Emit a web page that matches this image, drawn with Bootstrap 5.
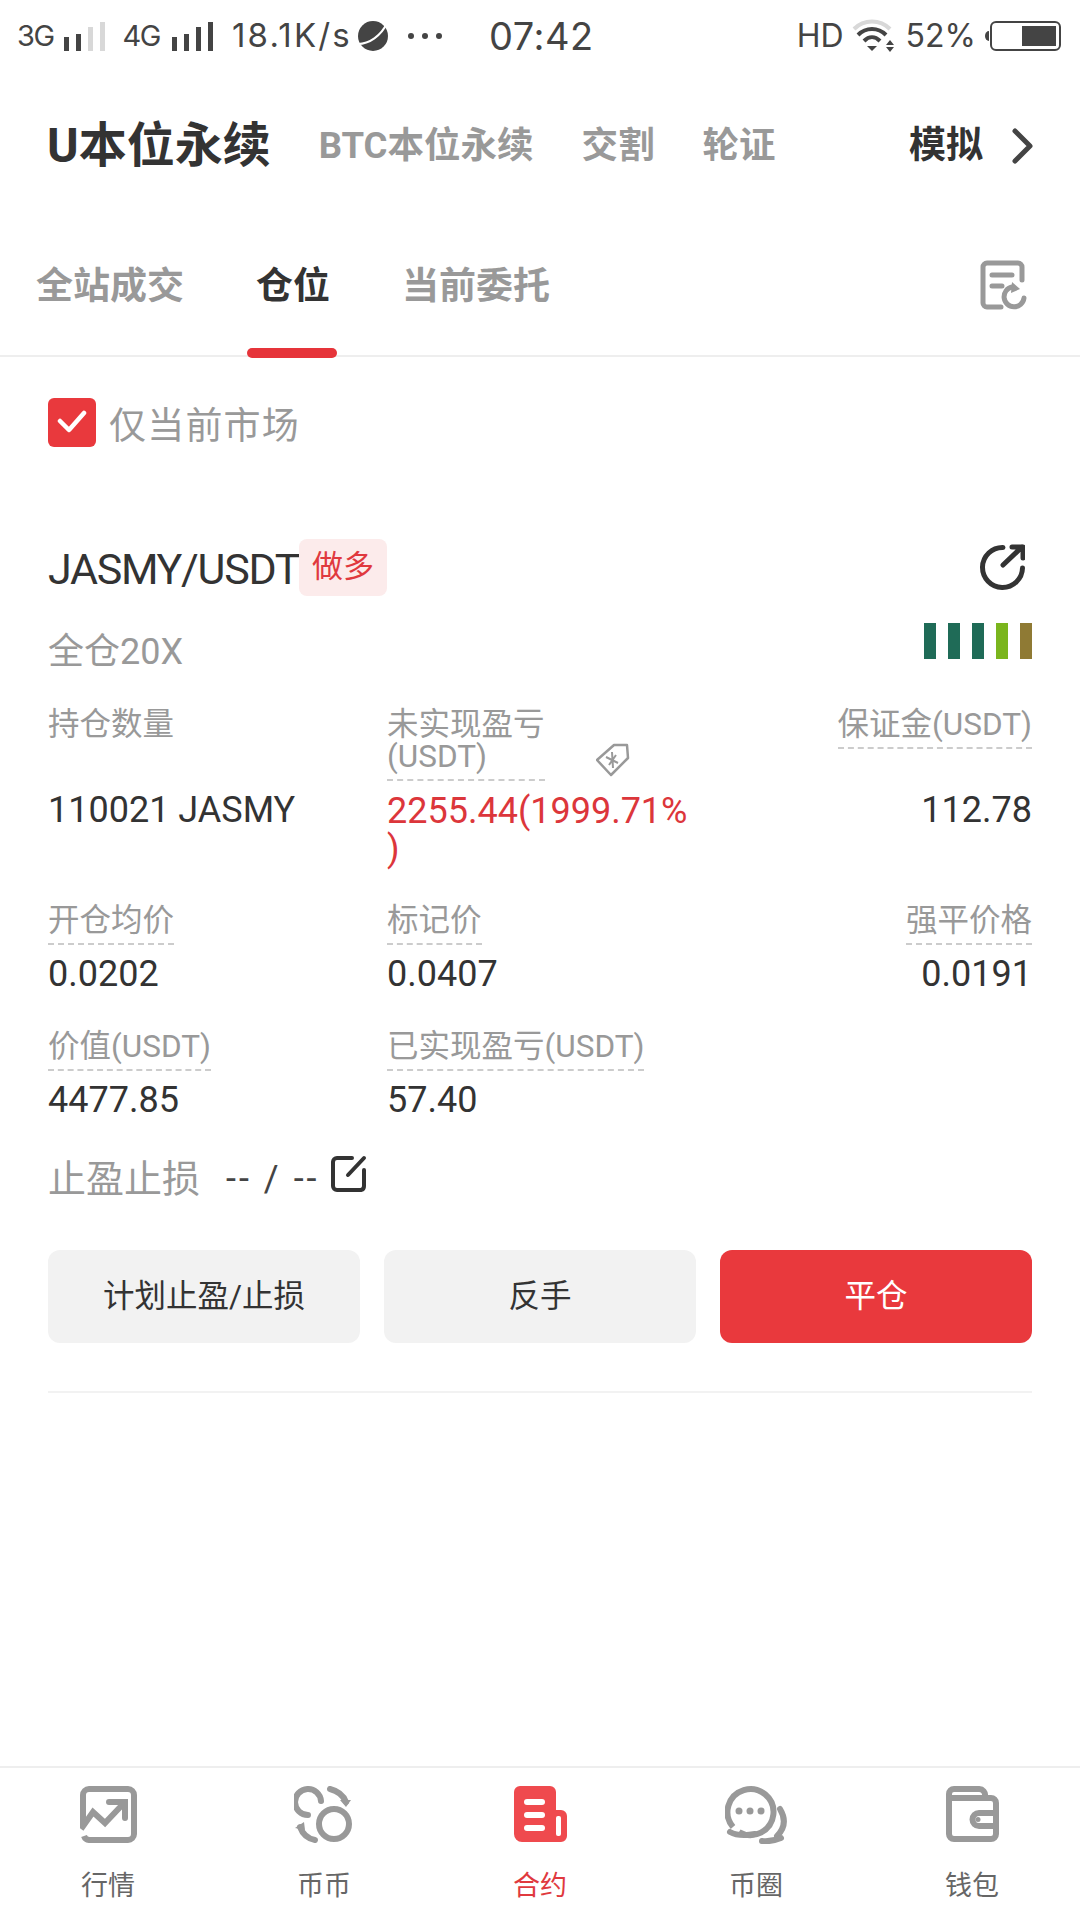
<!DOCTYPE html>
<html lang="zh">

<head>
    <meta charset="UTF-8">
    <title>合约</title>
    <link href="https://cdn.jsdelivr.net/npm/bootstrap@5.3.0/dist/css/bootstrap.min.css" rel="stylesheet">

    <style>
        body {
            background: #fff;
            color: #333;
            font-family: "Roboto", "Noto Sans CJK SC", sans-serif;
        }

        .status-bar {
            height: 72px;
            padding: 0 18px 0 17px;
            color: #444;
            font-family: "Inter", "Roboto", sans-serif;
        }

        .status-sm { font-size: 29px; letter-spacing: -1.5px; }
        .status-md { font-size: 32px; }
        .status-speed { font-size: 33px; letter-spacing: 2.2px; margin-left: 18px; }
        .status-time { font-size: 38px; margin-left: 46px; letter-spacing: .5px; }
        .sig-one { margin-left: 10px; }
        .net-two { margin-left: 17px; }
        .sig-two { margin-left: 12px; }
        .planet { margin-left: 5px; }
        .more-dots { margin-left: 18px; }

        .market-nav {
            height: 148px;
            padding: 0 46px 0 47px;
        }

        .market-main { font-size: 48px; font-weight: 700; color: #333; margin-right: 48px; }
        .market-item { font-size: 36.5px; font-weight: 700; color: #999; margin-right: 48px; }
        .market-demo { font-size: 37px; font-weight: 700; color: #333; margin-right: 29px; }

        .sub-tabs {
            height: 137px;
            padding: 0 53px 41px 36px;
            border-bottom: 2px solid #eee;
        }

        .sub-tab {
            position: relative;
            font-size: 37px;
            font-weight: 700;
            color: #999;
            margin-right: 72px;
        }

        .sub-tab.active { color: #333; }

        .sub-tab.active::after {
            content: "";
            position: absolute;
            left: -9px;
            right: -7px;
            top: 89px;
            height: 10px;
            border-radius: 5px;
            background: #e6343a;
        }

        .records-icon { margin-bottom: 4px; }

        .only-market {
            margin: 41px 48px 0;
            height: 48px;
            font-size: 37px;
            color: #999;
            letter-spacing: 1.2px;
        }

        .only-text { padding-top: 10px; }

        .check-box {
            width: 48px;
            height: 49px;
            border-radius: 6px;
            background: #e9393d;
            margin-right: 13px;
        }

        .position-block { padding: 0 48px; }

        .pair-row { margin-top: 92px; height: 58px; }
        .pair-name { font-size: 43px; font-weight: 400; color: #333; letter-spacing: -1.3px; padding-top: 4px; }

        .side-tag {
            width: 88px;
            height: 57px;
            border-radius: 8px;
            background: #fcebeb;
            color: #e0393e;
            font-size: 31px;
        }

        .share-icon { margin-right: 7px; }

        .lever-row { margin-top: 33px; height: 46px; font-size: 36px; color: #999; }
        .bars { gap: 12px; margin-top: -22px; }
        .bars span { width: 12px; height: 36px; display: block; }
        .bar-green { background: #1f6b57; }
        .bar-lime { background: #7ab51d; }
        .bar-brown { background: #8f7a34; }

        .info-grid {
            display: grid;
            grid-template-columns: 339px 302px 1fr;
            margin-top: 34px;
        }

        .info-cell { position: relative; }
        .info-label {
            display: inline-block;
            font-size: 31.5px;
            line-height: 32px;
            color: #999;
            padding-bottom: 6px;
            border-bottom: 2px dashed #ccc;
        }

        .info-label.plain { border-color: transparent; }
        .info-value { font-size: 36px; line-height: 38px; color: #333; margin-top: 10px; }
        .info-value.gain { color: #dc363b; line-break: anywhere; }
        .top-row .info-value { margin-top: 11px; }
        .top-row .info-value.one-line { margin-top: 42px; }
        .later-row { margin-top: 37px; }
        .next-row { margin-top: 38px; }

        .tag-icon { position: absolute; left: 209px; top: 34px; }

        .stop-row { margin-top: 36px; height: 48px; font-size: 38px; color: #999; }
        .stop-val { font-size: 36px; letter-spacing: 3px; color: #444; margin: 0 10px 0 26px; }
        .edit-icon { margin-top: -10px; }

        .action-row { gap: 24px; margin-top: 47px; }

        .action-btn {
            flex: 1 1 0;
            height: 93px;
            border: 0;
            border-radius: 12px;
            font-size: 31.5px;
            background: #f2f2f2;
            color: #333;
        }

        .action-btn.danger { background: #e9393d; color: #fff; }

        .end-line { margin-top: 48px; border-top: 2px solid #f2f2f2; }

        .tab-bar {
            height: 154px;
            border-top: 2px solid #eee;
        }

        .tab-cell {
            flex: 1 1 0;
            padding-top: 18px;
            font-size: 27px;
            color: #666;
        }

        .tab-cell.active { color: #e0393e; }
        .tab-icon { height: 62px; }
        .tab-label { margin-top: 20px; line-height: 36px; }
        .chat-icon { margin-top: -2px; }
    </style>
</head>

<body>
    <div class="d-flex flex-column min-vh-100">
        <div class="status-bar d-flex align-items-center">
            <span class="status-sm">3G</span>
            <svg class="sig-one" width="42" height="32" viewBox="0 0 42 32">
                <rect x="0" y="17" width="5" height="14" fill="#444" />
                <rect x="12" y="14" width="5" height="17" fill="#444" />
                <rect x="24" y="7" width="5" height="24" fill="#d8d8d8" />
                <rect x="36" y="2" width="5" height="29" fill="#d8d8d8" />
            </svg>
            <span class="status-sm net-two">4G</span>
            <svg class="sig-two" width="42" height="32" viewBox="0 0 42 32">
                <rect x="0" y="17" width="5" height="14" fill="#444" />
                <rect x="12" y="14" width="5" height="17" fill="#444" />
                <rect x="24" y="7" width="5" height="24" fill="#444" />
                <rect x="36" y="2" width="5" height="29" fill="#444" />
            </svg>
            <span class="status-speed">18.1K/s</span>
            <svg class="planet" width="32" height="32" viewBox="0 0 32 32">
                <circle cx="16" cy="16" r="15" fill="#444" />
                <path d="M1 24 C12 24 24 16 30 3" fill="none" stroke="#fff" stroke-width="2" />
            </svg>
            <svg class="more-dots" width="36" height="8" viewBox="0 0 36 8">
                <circle cx="4" cy="4" r="3" fill="#444" />
                <circle cx="18" cy="4" r="3" fill="#444" />
                <circle cx="32" cy="4" r="3" fill="#444" />
            </svg>
            <span class="status-time">07:42</span>

            <span class="status-md ms-auto">HD</span>
            <svg class="ms-2" width="46" height="36" viewBox="0 0 46 36">
                <path d="M2 11 C12 1 28 1 38 11" fill="none" stroke="#d8d8d8" stroke-width="4" />
                <path d="M6 17 C14 9 26 9 34 17" fill="none" stroke="#444" stroke-width="4" />
                <path d="M12 23 C17 18 23 18 28 23" fill="none" stroke="#444" stroke-width="4" />
                <path d="M15 28 H25 L20 33 Z" fill="#444" />
                <path d="M38 22 L42 27 H34 Z M34 29 H42 L38 34 Z" fill="#444" />
            </svg>
            <span class="status-md ms-2">52%</span>
            <svg class="ms-2" width="78" height="32" viewBox="0 0 78 32">
                <path d="M5 11 V21 A4 5 0 0 1 5 11 Z" fill="#444" />
                <rect x="7" y="2" width="69" height="28" rx="5" fill="none" stroke="#444" stroke-width="2" />
                <rect x="38" y="6" width="34" height="20" fill="#444" />
            </svg>
        </div>

        <div class="market-nav d-flex align-items-center">
            <span class="market-main">U本位永续</span>
            <span class="market-item">BTC本位永续</span>
            <span class="market-item">交割</span>
            <span class="market-item">轮证</span>
            <span class="market-demo ms-auto">模拟</span>
            <svg width="22" height="36" viewBox="0 0 22 36">
                <path d="M3 3 L18 18 L3 33" fill="none" stroke="#444" stroke-width="5" stroke-linecap="round" stroke-linejoin="round" />
            </svg>
        </div>

        <div class="sub-tabs d-flex align-items-end">
            <span class="sub-tab">全站成交</span>
            <span class="sub-tab active">仓位</span>
            <span class="sub-tab">当前委托</span>
            <svg class="records-icon ms-auto" width="47" height="50" viewBox="0 0 47 50">
                <path d="M21 47 H7 A4 4 0 0 1 3 43 V7 A4 4 0 0 1 7 3 H38 A4 4 0 0 1 42 7 V20" fill="none" stroke="#999" stroke-width="5" stroke-linecap="round" />
                <path d="M12 15 H32 M12 26 H22" fill="none" stroke="#999" stroke-width="5" stroke-linecap="round" />
                <path d="M44 38 A10 10 0 1 1 32 27" fill="none" stroke="#999" stroke-width="5" stroke-linecap="round" />
                <path d="M32 22 L40 29 L31 33 Z" fill="#999" />
            </svg>
        </div>

        <div class="only-market d-flex align-items-center">
            <span class="check-box d-flex align-items-center justify-content-center">
                <svg width="30" height="24" viewBox="0 0 30 24">
                    <path d="M3 11 L12 20 L27 3" fill="none" stroke="#fff" stroke-width="4.5" stroke-linecap="round" stroke-linejoin="round" />
                </svg>
            </span>
            <span class="only-text">仅当前市场</span>
        </div>

        <div class="position-block">
            <div class="pair-row d-flex align-items-center">
                <span class="pair-name">JASMY/USDT</span>
                <span class="side-tag d-flex align-items-center justify-content-center">做多</span>
                <svg class="share-icon ms-auto" width="46" height="46" viewBox="0 0 46 46">
                    <path d="M24 3.5 A20 20 0 1 0 43.5 24" fill="none" stroke="#333" stroke-width="5" stroke-linecap="round" />
                    <path d="M24 21 L43 3 M33 3 H44 V14" fill="none" stroke="#333" stroke-width="5" stroke-linecap="round" stroke-linejoin="round" />
                </svg>
            </div>

            <div class="lever-row d-flex align-items-center justify-content-between">
                <span>全仓20X</span>
                <span class="bars d-flex">
                    <span class="bar-green"></span>
                    <span class="bar-green"></span>
                    <span class="bar-green"></span>
                    <span class="bar-lime"></span>
                    <span class="bar-brown"></span>
                </span>
            </div>

            <div class="info-grid top-row">
                <div class="info-cell">
                    <span class="info-label plain">持仓数量</span>
                    <div class="info-value one-line">110021 JASMY</div>
                </div>
                <div class="info-cell">
                    <span class="info-label">未实现盈亏<br>(USDT)</span>
                    <svg class="tag-icon" width="34" height="34" viewBox="0 0 34 34">
                        <path d="M1 17 L18 2 H31 L32 15 L15 32 Z" fill="none" stroke="#999" stroke-width="2.5" stroke-linejoin="round" />
                        <path d="M10 14 L22 20 M13 22 L20 12 M16 9 L17 25" fill="none" stroke="#999" stroke-width="2" />
                    </svg>
                    <div class="info-value gain">2255.44(1999.71%)</div>
                </div>
                <div class="info-cell text-end">
                    <span class="info-label">保证金(USDT)</span>
                    <div class="info-value one-line">112.78</div>
                </div>
            </div>

            <div class="info-grid later-row">
                <div class="info-cell">
                    <span class="info-label">开仓均价</span>
                    <div class="info-value">0.0202</div>
                </div>
                <div class="info-cell">
                    <span class="info-label">标记价</span>
                    <div class="info-value">0.0407</div>
                </div>
                <div class="info-cell text-end">
                    <span class="info-label">强平价格</span>
                    <div class="info-value">0.0191</div>
                </div>
            </div>

            <div class="info-grid next-row">
                <div class="info-cell">
                    <span class="info-label">价值(USDT)</span>
                    <div class="info-value">4477.85</div>
                </div>
                <div class="info-cell">
                    <span class="info-label">已实现盈亏(USDT)</span>
                    <div class="info-value">57.40</div>
                </div>
            </div>

            <div class="stop-row d-flex align-items-center">
                止盈止损
                <span class="stop-val">-- / --</span>
                <svg class="edit-icon" width="37" height="38" viewBox="0 0 37 38">
                    <path d="M22 3 H7 A4 4 0 0 0 3 7 V31 A4 4 0 0 0 7 35 H31 A4 4 0 0 0 34 31 V15" fill="none" stroke="#333" stroke-width="4" stroke-linecap="round" />
                    <path d="M18 20 L34 3" fill="none" stroke="#333" stroke-width="4" stroke-linecap="round" />
                </svg>
            </div>

            <div class="action-row d-flex">
                <button class="action-btn" type="button">计划止盈/止损</button>
                <button class="action-btn" type="button">反手</button>
                <button class="action-btn danger" type="button">平仓</button>
            </div>

            <div class="end-line"></div>
        </div>

        <div class="tab-bar d-flex mt-auto">
            <div class="tab-cell text-center">
                <div class="tab-icon">
                    <svg width="57" height="57" viewBox="0 0 57 57">
                        <path d="M3 41 V9 A6 6 0 0 1 9 3 H48 A6 6 0 0 1 54 9 V48 A6 6 0 0 1 48 54 H10 A6 6 0 0 1 4 50" fill="none" stroke="#999" stroke-width="6" />
                        <path d="M1 43 L13 26 L25 37 L44 17" fill="none" stroke="#999" stroke-width="6" />
                        <path d="M29 16 H45 V32" fill="none" stroke="#999" stroke-width="6" stroke-linecap="round" />
                    </svg>
                </div>
                <div class="tab-label">行情</div>
            </div>
            <div class="tab-cell text-center">
                <div class="tab-icon">
                    <svg width="60" height="57" viewBox="0 0 60 57">
                        <path d="M27 15 A13 13 0 1 0 14 29" fill="none" stroke="#999" stroke-width="6" stroke-linecap="round" />
                        <circle cx="40" cy="38" r="15" fill="none" stroke="#999" stroke-width="6" />
                        <path d="M36 3 Q48 6 52 16" fill="none" stroke="#999" stroke-width="6" stroke-linecap="round" />
                        <path d="M46 14 L57 14 L52 21 Z" fill="#999" />
                        <path d="M21 54 Q10 52 6 41" fill="none" stroke="#999" stroke-width="6" stroke-linecap="round" />
                        <path d="M1 42 L10 36 L11 44 Z" fill="#999" />
                    </svg>
                </div>
                <div class="tab-label">币币</div>
            </div>
            <div class="tab-cell active text-center">
                <div class="tab-icon">
                    <svg width="53" height="57" viewBox="0 0 53 57">
                        <path d="M6 0 H36 A6 6 0 0 1 42 6 V24 H47 A6 6 0 0 1 53 30 V50 A6 6 0 0 1 47 56 H8 A8 8 0 0 1 0 48 V6 A6 6 0 0 1 6 0 Z" fill="#ef4a4e" />
                        <rect x="10" y="13" width="21" height="6" rx="3" fill="#fff" />
                        <rect x="10" y="26" width="21" height="6" rx="3" fill="#fff" />
                        <rect x="10" y="39" width="21" height="6" rx="3" fill="#fff" />
                        <rect x="42" y="30" width="5" height="20" rx="2" fill="#fff" />
                    </svg>
                </div>
                <div class="tab-label">合约</div>
            </div>
            <div class="tab-cell text-center">
                <div class="tab-icon">
                    <svg class="chat-icon" width="62" height="60" viewBox="0 0 62 60">
                        <path d="M14 48 A23 23 0 1 0 8 43" fill="none" stroke="#999" stroke-width="6" />
                        <path d="M5 48 Q14 53 30 50" fill="none" stroke="#999" stroke-width="6" stroke-linecap="round" />
                        <circle cx="14" cy="27" r="3.5" fill="#999" />
                        <circle cx="25" cy="27" r="3.5" fill="#999" />
                        <circle cx="36" cy="27" r="3.5" fill="#999" />
                        <path d="M55 25 Q64 40 52 52" fill="none" stroke="#999" stroke-width="6" stroke-linecap="round" />
                        <path d="M37 57 Q46 58 56 54" fill="none" stroke="#999" stroke-width="6" stroke-linecap="round" />
                    </svg>
                </div>
                <div class="tab-label">币圈</div>
            </div>
            <div class="tab-cell text-center">
                <div class="tab-icon">
                    <svg width="53" height="57" viewBox="0 0 53 57">
                        <path d="M3 12 V48 A5 5 0 0 0 8 53 H45 A5 5 0 0 0 50 48 V17 A5 5 0 0 0 45 12 H3 V8 A5 5 0 0 1 8 3 H33 A6 6 0 0 1 39 10" fill="none" stroke="#999" stroke-width="6" stroke-linejoin="round" />
                        <path d="M50 27 H33 A6.5 6.5 0 0 0 33 40 H50" fill="none" stroke="#999" stroke-width="6" />
                        <circle cx="32" cy="33.5" r="2.5" fill="#999" />
                    </svg>
                </div>
                <div class="tab-label">钱包</div>
            </div>
        </div>
    </div>

    <script src="https://cdn.jsdelivr.net/npm/bootstrap@5.3.0/dist/js/bootstrap.bundle.min.js"></script>
</body>

</html>
